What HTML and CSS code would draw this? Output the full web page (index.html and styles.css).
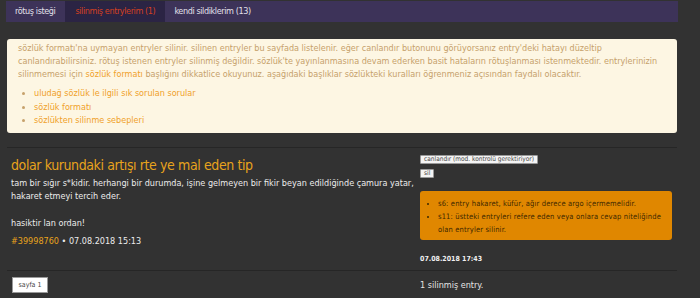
FILE: index.html
```html
<!DOCTYPE html>
<html lang="tr">
<head>
  <meta charset="UTF-8">
  <title>silinmiş entrylerim</title>
  <link rel="stylesheet" href="styles.css">
</head>
<body>

<div class="page">
  <div class="tabs">
    <a class="tab" href="#">rötuş isteği</a>
    <a class="tab active" href="#">silinmiş entrylerim (1)</a>
    <a class="tab" href="#">kendi sildiklerim (13)</a>
  </div>

  <div class="notice">
    <p>sözlük formatı'na uymayan entryler silinir. silinen entryler bu sayfada listelenir. eğer canlandır butonunu görüyorsanız entry'deki hatayı düzeltip canlandırabilirsiniz. rötuş istenen entryler silinmiş değildir. sözlük'te yayınlanmasına devam ederken basit hataların rötuşlanması istenmektedir. entrylerinizin silinmemesi için <a href="#">sözlük formatı</a> başlığını dikkatlice okuyunuz. aşağıdaki başlıklar sözlükteki kuralları öğrenmeniz açısından faydalı olacaktır.</p>
    <ul>
      <li><a href="#">uludağ sözlük le ilgili sık sorulan sorular</a></li>
      <li><a href="#">sözlük formatı</a></li>
      <li><a href="#">sözlükten silinme sebepleri</a></li>
    </ul>
  </div>

  <div class="entry">
    <div class="entry-main">
      <h2 class="entry-title">dolar kurundaki artışı rte ye mal eden tip</h2>
      <div class="entry-body">tam bir sığır s*kidir. herhangi bir durumda, işine gelmeyen bir fikir beyan edildiğinde çamura yatar, hakaret etmeyi tercih eder.<br><br>hasiktir lan ordan!</div>
      <div class="entry-meta"><a href="#">#39998760</a> &bull; 07.08.2018 15:13</div>
    </div>
    <div class="entry-side">
      <button class="small-btn">canlandır (mod. kontrolü gerektiriyor)</button>
      <button class="small-btn">sil</button>
      <div class="reasons">
        <ul>
          <li>s6: entry hakaret, küfür, ağır derece argo içermemelidir.</li>
          <li>s11: üstteki entryleri refere eden veya onlara cevap niteliğinde olan entryler silinir.</li>
        </ul>
      </div>
      <div class="deleted-at">07.08.2018 17:43</div>
    </div>
  </div>

  <div class="pager">
    <div class="pager-left">
      <button class="page-btn">sayfa 1</button>
    </div>
    <div class="pager-right">1 silinmiş entry.</div>
  </div>
</div>

</body>
</html>
```

FILE: styles.css
```css
body {
  margin: 0;
  background: #323232;
  font-family: 'DejaVu Sans Condensed', 'DejaVu Sans', sans-serif;
  font-size: 9px;
  color: #e4e4e4;
}

a {
  text-decoration: none;
}

.page {
  width: 672px;
  margin-left: 6px;
  padding-top: 1px;
}

.tabs {
  display: flex;
  background: #3d3359;
  height: 21px;
}

.tab {
  padding: 0 10px 0 9px;
  line-height: 21px;
  color: #e2e0ea;
  letter-spacing: -0.4px;
}

.tab.active {
  background: #2b2444;
  color: #d5401f;
  padding: 0 10px;
}

.notice {
  margin: 17px 1px 0;
  background: #fdf6e3;
  border-radius: 3px;
  padding: 3px 11px 5px;
  color: #c6a16b;
  line-height: 13px;
}

.notice p {
  margin: 0;
}

.notice a {
  color: #f0a12a;
}

.notice ul {
  margin: 6px 0 0;
  padding-left: 16px;
}

.notice li {
  line-height: 13.5px;
}

.entry {
  display: flex;
  margin: 14px 1px 0;
  border-top: 1px solid #262626;
  border-bottom: 1px solid #262626;
}

.entry-main {
  width: 413px;
  padding: 8px 0 0 4px;
  box-sizing: border-box;
}

.entry-title {
  margin: 0;
  font-size: 14px;
  line-height: 18px;
  font-weight: normal;
  color: #e8a31c;
  letter-spacing: -0.4px;
}

.entry-body {
  margin-top: 3px;
  line-height: 13.5px;
  color: #ececec;
}

.entry-meta {
  margin-top: 3px;
  line-height: 14px;
  color: #ececec;
}

.entry-meta a {
  color: #e8a31c;
}

.entry-side {
  width: 252px;
  padding: 7px 0 6px;
  display: flex;
  flex-direction: column;
  align-items: flex-start;
}

.small-btn {
  font-family: inherit;
  font-size: 6.5px;
  line-height: 7px;
  padding: 0 3px;
  background: #f4f4f4;
  color: #444;
  border: 1px solid #999;
  border-radius: 1px;
  margin-bottom: 5px;
}

.reasons {
  width: 100%;
  box-sizing: border-box;
  margin-top: 8px;
  background: #e08700;
  border-radius: 3px;
  padding: 6px 6px 4px 10px;
  color: #3d2800;
  font-size: 7.5px;
  line-height: 13px;
  letter-spacing: 0.15px;
}

.reasons ul {
  margin: 0;
  padding-left: 8px;
}

.deleted-at {
  margin-top: 14px;
  font-size: 7px;
  line-height: 10px;
  font-weight: bold;
  color: #f0f0f0;
}

.pager {
  display: flex;
  margin: 0 1px;
  padding-top: 6px;
}

.pager-left {
  width: 413px;
  padding-left: 5px;
  box-sizing: border-box;
}

.page-btn {
  font-family: inherit;
  font-size: 7px;
  height: 16px;
  width: 36px;
  padding: 0;
  background: #fff;
  color: #444;
  border: 1px solid #999;
}

.pager-right {
  line-height: 16px;
  color: #e4e4e4;
}
```
